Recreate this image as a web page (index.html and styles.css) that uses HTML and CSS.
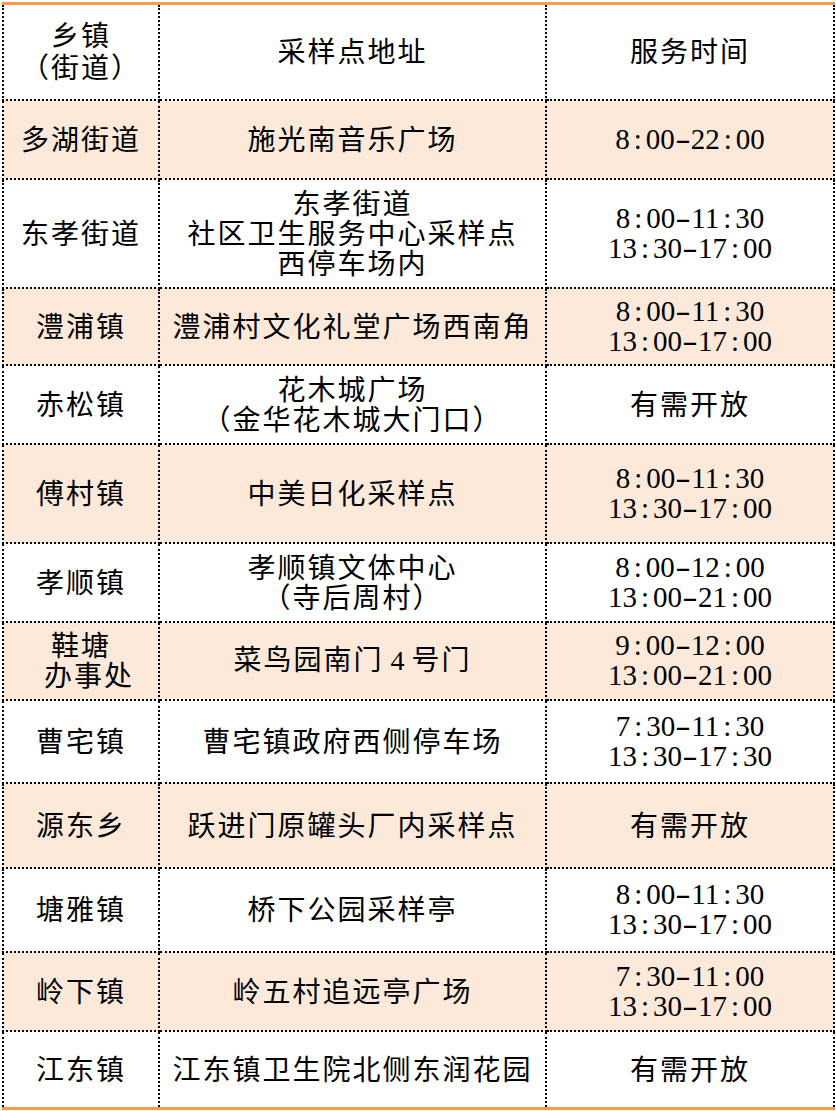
FILE: index.html
```html
<!DOCTYPE html>
<html lang="zh-CN">
<head>
<meta charset="utf-8">
<title>采样点</title>
<link rel="stylesheet" href="styles.css">
</head>
<body>
<table class="sites">
  <colgroup>
    <col class="c-town">
    <col class="c-addr">
    <col class="c-time">
  </colgroup>
  <tr class="head">
    <td class="two">乡镇<br>（街道）</td>
    <td>采样点地址</td>
    <td>服务时间</td>
  </tr>
  <tr class="r1 alt">
    <td>多湖街道</td>
    <td>施光南音乐广场</td>
    <td class="t">8<span class="p">:</span>00<span class="d">-</span>22<span class="p">:</span>00</td>
  </tr>
  <tr class="r2">
    <td>东孝街道</td>
    <td>东孝街道<br>社区卫生服务中心采样点<br>西停车场内</td>
    <td class="t">8<span class="p">:</span>00<span class="d">-</span>11<span class="p">:</span>30<br>13<span class="p">:</span>30<span class="d">-</span>17<span class="p">:</span>00</td>
  </tr>
  <tr class="r3 alt">
    <td>澧浦镇</td>
    <td>澧浦村文化礼堂广场西南角</td>
    <td class="t">8<span class="p">:</span>00<span class="d">-</span>11<span class="p">:</span>30<br>13<span class="p">:</span>00<span class="d">-</span>17<span class="p">:</span>00</td>
  </tr>
  <tr class="r4">
    <td>赤松镇</td>
    <td>花木城广场<br>（金华花木城大门口）</td>
    <td>有需开放</td>
  </tr>
  <tr class="r5 alt">
    <td>傅村镇</td>
    <td>中美日化采样点</td>
    <td class="t">8<span class="p">:</span>00<span class="d">-</span>11<span class="p">:</span>30<br>13<span class="p">:</span>30<span class="d">-</span>17<span class="p">:</span>00</td>
  </tr>
  <tr class="r6">
    <td>孝顺镇</td>
    <td>孝顺镇文体中心<br>（寺后周村）</td>
    <td class="t">8<span class="p">:</span>00<span class="d">-</span>12<span class="p">:</span>00<br>13<span class="p">:</span>00<span class="d">-</span>21<span class="p">:</span>00</td>
  </tr>
  <tr class="r7 alt">
    <td>鞋塘<br>&#8194;办事处</td>
    <td>菜鸟园南门<span class="num"> 4 </span>号门</td>
    <td class="t">9<span class="p">:</span>00<span class="d">-</span>12<span class="p">:</span>00<br>13<span class="p">:</span>00<span class="d">-</span>21<span class="p">:</span>00</td>
  </tr>
  <tr class="r8">
    <td>曹宅镇</td>
    <td>曹宅镇政府西侧停车场</td>
    <td class="t">7<span class="p">:</span>30<span class="d">-</span>11<span class="p">:</span>30<br>13<span class="p">:</span>30<span class="d">-</span>17<span class="p">:</span>30</td>
  </tr>
  <tr class="r9 alt">
    <td>源东乡</td>
    <td>跃进门原罐头厂内采样点</td>
    <td>有需开放</td>
  </tr>
  <tr class="r10">
    <td>塘雅镇</td>
    <td>桥下公园采样亭</td>
    <td class="t">8<span class="p">:</span>00<span class="d">-</span>11<span class="p">:</span>30<br>13<span class="p">:</span>30<span class="d">-</span>17<span class="p">:</span>00</td>
  </tr>
  <tr class="r11 alt">
    <td>岭下镇</td>
    <td>岭五村追远亭广场</td>
    <td class="t">7<span class="p">:</span>30<span class="d">-</span>11<span class="p">:</span>00<br>13<span class="p">:</span>30<span class="d">-</span>17<span class="p">:</span>00</td>
  </tr>
  <tr class="r12 last">
    <td>江东镇</td>
    <td>江东镇卫生院北侧东润花园</td>
    <td>有需开放</td>
  </tr>
</table>
</body>
</html>
```

FILE: styles.css
```css
html, body {
  margin: 0;
  padding: 0;
  background: #ffffff;
}

.sites {
  border-collapse: collapse;
  table-layout: fixed;
  width: 831px;
  margin: 2px 0 0 2px;
  font-family: "Noto Sans CJK SC", sans-serif;
  font-size: 28px;
  line-height: 30px;
  color: #000000;
}

.c-town { width: 156px; }
.c-addr { width: 387px; }
.c-time { width: 288px; }

.sites td {
  border: 2px dotted #000000;
  text-align: center;
  vertical-align: middle;
  padding: 0 0 3px;
  letter-spacing: 2px;
  white-space: nowrap;
}

.sites tr.head td {
  border-top: 3px solid #f59a4f;
}

.sites tr.last td {
  border-bottom: 3px solid #f59a4f;
}

.sites tr.alt td {
  background: #fce9da;
}

.sites td.two {
  line-height: 32px;
}

.sites td.t,
.sites .num {
  font-family: "Liberation Serif", "Times New Roman", serif;
  letter-spacing: 0;
}

.sites td.t {
  font-size: 29px;
  padding-bottom: 1px;
}

.sites .p,
.sites .d {
  display: inline-block;
  width: 16px;
  text-align: center;
}

.sites .d {
  transform: scaleX(1.6);
}

.head { height: 96px; }
.r1 { height: 79px; }
.r2 { height: 109px; }
.r3 { height: 77px; }
.r4 { height: 79px; }
.r5 { height: 99px; }
.r6 { height: 79px; }
.r7 { height: 78px; }
.r8 { height: 83px; }
.r9 { height: 85px; }
.r10 { height: 84px; }
.r11 { height: 79px; }
.r12 { height: 78px; }
```
